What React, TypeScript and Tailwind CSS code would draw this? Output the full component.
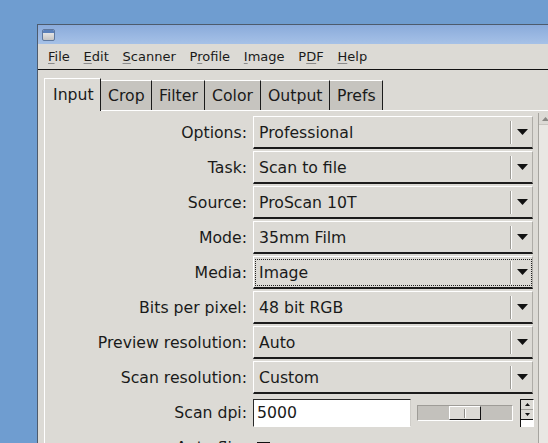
import React from "react";

const menus = [
  { key: "F", rest: "ile" },
  { key: "E", rest: "dit" },
  { key: "S", rest: "canner" },
  { pre: "P", key: "r", rest: "ofile" },
  { key: "I", rest: "mage" },
  { pre: "P", key: "D", rest: "F" },
  { key: "H", rest: "elp" },
];

const tabs = [
  { name: "Input", w: "w-[57px]" },
  { name: "Crop", w: "w-[51px]" },
  { name: "Filter", w: "w-[53px]" },
  { name: "Color", w: "w-[56px]" },
  { name: "Output", w: "w-[69px]" },
  { name: "Prefs", w: "w-[53px]" },
];

const rows = [
  { label: "Options:", value: "Professional" },
  { label: "Task:", value: "Scan to file" },
  { label: "Source:", value: "ProScan 10T" },
  { label: "Mode:", value: "35mm Film" },
  { label: "Media:", value: "Image", focused: true },
  { label: "Bits per pixel:", value: "48 bit RGB" },
  { label: "Preview resolution:", value: "Auto" },
  { label: "Scan resolution:", value: "Custom" },
];

function Combo({ value, focused }: { value: string; focused?: boolean }) {
  return (
    <div className="relative flex h-[33px] w-[280px] border-t border-l border-white border-r border-r-[#aeaca7] border-b-2 border-b-[#1b1b1b] bg-[#dcdad5]">
      <div className="flex flex-1 items-center pl-[5px] pt-[1px]">{value}</div>
      <div className="flex items-center">
        <div className="h-[23px] w-[2px] border-l border-[#9c9a95] border-r border-r-white" />
      </div>
      <div className="flex w-[20px] items-center justify-center">
        <svg width="11" height="6" viewBox="0 0 11 6">
          <polygon points="0,0 11,0 5.5,6" fill="#111" />
        </svg>
      </div>
      {focused && (
        <div className="absolute top-[2px] left-[1px] right-[0px] bottom-[1px] border border-dotted border-[#222]" />
      )}
    </div>
  );
}

export default function App() {
  return (
    <div className="relative h-[443px] w-[548px] overflow-hidden bg-[#6f9dd0] font-['DejaVu_Sans',sans-serif] text-[#1a1a1a]">
      <div className="ml-[37px] mt-[24px] h-[430px] w-[540px] border-l border-t border-[#4d5b6d] bg-[#dcdad5]">
        {/* title bar */}
        <div className="flex h-[19px] items-center bg-gradient-to-b from-[#8aabdb] to-[#a6c1e7] pl-[4px]">
          <div className="h-[12px] w-[13px] overflow-hidden rounded-[2px] border border-[#5f789e] bg-gradient-to-b from-[#f2f2f2] to-[#c4c4c4]">
            <div className="h-[3px] bg-[#5a80ba]" />
          </div>
        </div>

        {/* menu bar */}
        <div className="flex h-[26px] items-center gap-[13.8px] border-b border-[#111] pl-[10px] pt-[1px] text-[13px]">
          {menus.map((m) => (
            <span key={m.key + m.rest}>
              {m.pre}
              <span className="underline decoration-[#8a8a8a] underline-offset-[2px]">{m.key}</span>
              {m.rest}
            </span>
          ))}
        </div>

        {/* notebook */}
        <div className="pl-[6px] pt-[8px] text-[15.7px]">
          <div className="flex h-[32px] items-end">
            {tabs.map((t, i) =>
              i === 0 ? (
                <div
                  key={t.name}
                  className={`relative z-10 -mb-[1px] flex h-[33px] items-center border-t border-l border-white border-r border-r-[#1b1b1b] bg-[#dcdad5] pl-[8px] ${t.w}`}
                >
                  {t.name}
                </div>
              ) : (
                <div
                  key={t.name}
                  className={`flex h-[30px] items-center border-t border-white border-r border-r-[#1b1b1b] bg-[#c6c4bf] pl-[7px] ${t.w}`}
                >
                  {t.name}
                </div>
              )
            )}
          </div>

          <div className="flex h-[400px] border-t border-l border-white">
            <div className="flex flex-col pt-[5px]">
              <div className="flex flex-col gap-[2px]">
                {rows.map((r) => (
                  <div key={r.label} className="flex items-center gap-[6px]">
                    <div className="w-[202px] pt-[1px] text-right">{r.label}</div>
                    <Combo value={r.value} focused={r.focused} />
                  </div>
                ))}
              </div>

              {/* scan dpi */}
              <div className="mt-[5px] flex items-center gap-[6px]">
                <div className="w-[202px] text-right">Scan dpi:</div>
                <div className="flex h-[28px] w-[158px] items-center border-t border-l border-[#2a2a2a] border-r border-r-[#cfcdc8] border-b border-b-white bg-white pl-[3px]">
                  5000
                </div>
                <div className="flex h-[16px] w-[96px] border-t border-l border-[#9e9c97] border-r border-r-white border-b border-b-white bg-[#c3c1bc] pl-[31px]">
                  <div className="flex h-full w-[32px] items-center justify-center border-t border-l border-white border-r border-r-[#111] border-b border-b-[#111] bg-[#dcdad5]">
                    <div className="h-[9px] w-[2px] border-l border-[#8e8c87] border-r border-r-white" />
                  </div>
                </div>
                <div className="ml-[1px] flex h-[28px] w-[14px] flex-col border-t border-l border-[#111] border-r border-r-white bg-white">
                  <div className="flex h-[10px] items-center justify-center border-b border-[#9e9c97] bg-[#dcdad5]">
                    <svg width="5" height="3" viewBox="0 0 5 3">
                      <polygon points="0,3 5,3 2.5,0" fill="#111" />
                    </svg>
                  </div>
                  <div className="flex h-[10px] items-center justify-center border-b border-[#111] bg-[#dcdad5]">
                    <svg width="5" height="3" viewBox="0 0 5 3">
                      <polygon points="0,0 5,0 2.5,3" fill="#111" />
                    </svg>
                  </div>
                </div>
              </div>

              {/* auto flip */}
              <div className="mt-[8px] flex h-[26px] gap-[10px]">
                <div className="flex w-[202px] items-center justify-end">Auto flip:</div>
                <div className="mt-[7px] h-[13px] w-[13px] border border-[#111] bg-[#f4f3f1]" />
              </div>
            </div>

            {/* scrollbar */}
            <div className="ml-[4px] mt-[2px] w-[13px] border-l border-[#a6a49f] bg-[#e9e7e3]">
              <div className="flex h-[12px] items-center justify-center border-b border-[#c8c6c1] bg-[#dcdad5]">
                <svg width="7" height="4" viewBox="0 0 7 4">
                  <polygon points="0,4 7,4 3.5,0" fill="#8a8884" />
                </svg>
              </div>
            </div>
          </div>
        </div>
      </div>
    </div>
  );
}
